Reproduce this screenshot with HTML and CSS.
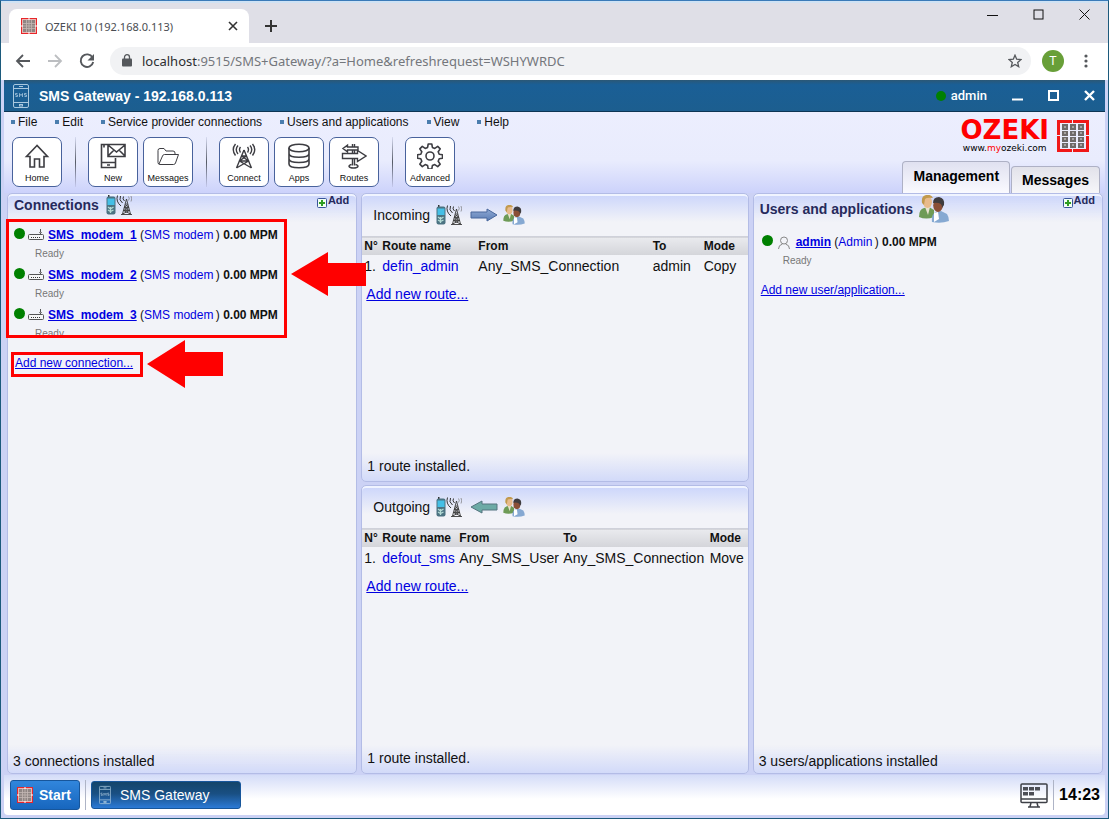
FILE: index.html
```html
<!DOCTYPE html>
<html lang="en">
<head>
<meta charset="utf-8">
<title>OZEKI 10 (192.168.0.113)</title>
<link rel="stylesheet" href="styles.css">
</head>
<body>
<svg class="defs" aria-hidden="true">
  <defs>
    <linearGradient id="blueArrow" x1="0" y1="0" x2="0" y2="1"><stop offset="0" stop-color="#8fa9d3"/><stop offset="1" stop-color="#5b7db5"/></linearGradient>
  </defs>
  <symbol id="grid-logo" viewBox="0 0 32 32">
    <path fill="#f01818" d="M0 0h15v3H3v12H0zM16 0h16v15h-3V3H16zM0 16h3v13h12v3H0zM29 16h3v16H16v-3h13z"/>
    <g fill="#6e6a6a"><path d="M5 4h6v6H5zM13 4h6v6h-6zM21 4h6v6h-6zM5 11h6v5H5zM13 11h6v5h-6zM21 11h6v5h-6zM5 17h6v5H5zM13 17h6v5h-6zM21 17h6v5h-6zM5 23h6v5H5zM13 23h6v5h-6zM21 23h6v5h-6z"/></g>
    <path stroke="#ddd" stroke-width="1" d="M7 7h2M15 7h2M23 7h2M7 13h2M15 13h2M23 13h2M7 19h2M15 19h2M23 19h2M7 25h2M15 25h2M23 25h2"/>
  </symbol>
  <symbol id="grid-small" viewBox="0 0 16 16">
    <rect x=".5" y=".5" width="15" height="15" fill="#e9b5b2" stroke="#e8262a"/>
    <rect x="2" y="2" width="12" height="12" fill="#8f8583"/>
    <path d="M5.500 2v12M8 2v12M10.500 2v12M2 5.500h12M2 8h12M2 10.500h12" stroke="#c4b8b4" stroke-width=".8"/>
    <path d="M8 0v2M8 14v2M0 8h2M14 8h2" stroke="#fff"/>
  </symbol>
  <symbol id="phone-sms" viewBox="0 0 16 24">
    <g fill="none" stroke="#a9c8de"><rect x=".5" y=".5" width="15" height="23" rx="1.500"/><path d="M1 4.500h14M1 18.500h14M6 2.500h4"/><path d="M4.500 9.500h-2v1.500h2v1.500h-2M6.500 13V9.500l1.500 2 1.500-2V13M13.500 9.500h-2v1.500h2v1.500h-2" stroke-width=".8"/><rect x="6.500" y="20.500" width="3" height="1.500"/></g>
  </symbol>
  <symbol id="tower" viewBox="0 0 26 20">
    <path d="M2 0h1.500v3H2z" fill="#333"/><rect x=".5" y="1.500" width="9" height="18" rx="2" fill="#4b7382"/><rect x="1.500" y="3.500" width="7" height="6.500" fill="#45bfe6"/>
    <path d="M2 12l2.500 2L7.500 12M2 15l2.500 1.500L7.500 15M4.500 12v6" fill="none" stroke="#b4dcd6" stroke-width="1.300"/>
    <path d="M20.500 4l-4 15M20.500 4l4 15M19.500 9h2M18.500 12.500h4M17.500 15.500h6M15 19.500h11M19 9.500l4 3-5.500 3 7 3.500M22 9.500l-4 3 5.500 3-7 3.500" fill="none" stroke="#3a3a3a" stroke-width=".9"/>
    <path d="M17.500 1.500q-1.500 2.500 1 4.500M14.500 1q-2 4 2 7M11.500.5q-2 6 3.500 10.500" fill="none" stroke="#333"/><path d="M22.500 1.500q1.500 2 0 4M25 1q1.500 3 0 5.500" fill="none" stroke="#777" stroke-width=".7"/>
  </symbol>
  <symbol id="people" viewBox="0 0 30 28">
    <path d="M0 22q0-8 5-9l5-1 5 3v7q-8 3-15 0z" fill="#6e9b56"/><path d="M6 12h5l-2 8z" fill="#e9e3cf"/>
    <ellipse cx="8.500" cy="7" rx="4.500" ry="6" fill="#e8bb8c"/><path d="M3 8q-1-7 4-8 5-1 7 3-6-1-8 1l-1 6z" fill="#c29a4d"/>
    <path d="M13 27q-1-8 4-10l5-1 6 3q2 3 2 7-8 3-17 1z" fill="#86a9d2"/><path d="M15 18l4-1 1 7-5 3z" fill="#fff"/>
    <ellipse cx="19" cy="10.500" rx="4.800" ry="6.500" fill="#8a4f37"/><path d="M14 8q0-6 6-6 6 1 5 8l-2 3q1-6-9-5z" fill="#3f3c3e"/>
  </symbol>
  <symbol id="modem" viewBox="0 0 16 12">
    <rect x=".5" y="5.500" width="15" height="5" rx="1" fill="#f6f6f6" stroke="#555"/><path d="M12.500 0v5" stroke="#555"/><path d="M11 3.500h3" stroke="#888"/><path d="M3 8.500h10" stroke="#333" stroke-dasharray="1 1"/>
  </symbol>
  <symbol id="plus" viewBox="0 0 10 10">
    <rect x=".5" y=".5" width="9" height="9" rx="1" fill="#f2fff2" stroke="#39559a"/><path d="M5 2v6M2 5h6" stroke="#2f9d22" stroke-width="2"/>
  </symbol>
</svg>

<div class="window">
  <header class="tabstrip">
    <div class="tab">
      <svg class="i16"><use href="#grid-small"/></svg>
      <span class="tab-title">OZEKI 10 (192.168.0.113)</span>
      <button class="plain" aria-label="Close tab"><svg class="i10" viewBox="0 0 10 10"><path d="M1 1l8 8M9 1L1 9" stroke="#333" stroke-width="1.600"/></svg></button>
    </div>
    <button class="plain new-tab" aria-label="New tab"><svg class="i12" viewBox="0 0 12 12"><path d="M6 0v12M0 6h12" stroke="#333" stroke-width="2"/></svg></button>
    <div class="win-controls">
      <button class="plain" aria-label="Minimize"><svg class="i11" viewBox="0 0 11 11"><path d="M0 6.500h11" stroke="#111"/></svg></button>
      <button class="plain" aria-label="Maximize"><svg class="i11" viewBox="0 0 11 11"><rect x="1" y="1" width="9" height="9" fill="none" stroke="#111"/></svg></button>
      <button class="plain" aria-label="Close"><svg class="i11" viewBox="0 0 11 11"><path d="M.5.5l10 10M10.500.5l-10 10" stroke="#111"/></svg></button>
    </div>
  </header>

  <div class="addressbar">
    <button class="plain" aria-label="Back"><svg class="i16" viewBox="0 0 16 16"><path d="M15 8H2M8 2L2 8l6 6" fill="none" stroke="#55585c" stroke-width="1.800"/></svg></button>
    <button class="plain" aria-label="Forward"><svg class="i16" viewBox="0 0 16 16"><path d="M1 8h13M8 2l6 6-6 6" fill="none" stroke="#bcbec1" stroke-width="1.800"/></svg></button>
    <button class="plain" aria-label="Reload"><svg class="i16" viewBox="0 0 16 16"><path d="M13.500 4.500A6.300 6.300 0 1 0 14.200 9" fill="none" stroke="#55585c" stroke-width="1.900"/><path d="M15 1v6.500H8.500z" fill="#55585c"/></svg></button>
    <div class="url">
      <svg class="lock" viewBox="0 0 10 13"><rect y="4.500" width="10" height="8" rx="1" fill="#55585c"/><path d="M2.500 5V3.200a2.500 2.500 0 0 1 5 0V5" fill="none" stroke="#55585c" stroke-width="1.300"/></svg>
      <span class="url-text"><b>localhost</b>:9515/SMS+Gateway/?a=Home&amp;refreshrequest=WSHYWRDC</span>
      <button class="plain" aria-label="Bookmark"><svg class="i14" viewBox="0 0 14 14"><path d="M7 1.200l1.700 4 4.300.4-3.300 2.800 1 4.300L7 10.400l-3.700 2.300 1-4.300L1 5.600l4.300-.4z" fill="none" stroke="#55585c" stroke-width="1.300"/></svg></button>
    </div>
    <button class="avatar">T</button>
    <button class="plain" aria-label="Menu"><svg class="dots" viewBox="0 0 4 14"><g fill="#55585c"><circle cx="2" cy="2" r="1.600"/><circle cx="2" cy="7" r="1.600"/><circle cx="2" cy="12" r="1.600"/></g></svg></button>
  </div>

  <main class="desktop">
    <div class="titlebar">
      <svg class="title-phone"><use href="#phone-sms"/></svg>
      <h1>SMS Gateway - 192.168.0.113</h1>
      <span class="dot small"></span><span class="user">admin</span>
      <button class="plain" aria-label="Minimize app"><svg class="i11" viewBox="0 0 11 11"><path d="M0 9.500h11" stroke="#fff" stroke-width="2"/></svg></button>
      <button class="plain" aria-label="Maximize app"><svg class="i11" viewBox="0 0 11 11"><rect x="1" y="1" width="9" height="9" fill="none" stroke="#fff" stroke-width="2"/></svg></button>
      <button class="plain" aria-label="Close app"><svg class="i11" viewBox="0 0 11 11"><path d="M1 1l9 9M10 1l-9 9" stroke="#fff" stroke-width="2.400"/></svg></button>
    </div>

    <div class="top">
      <div class="top-left">
        <nav class="menu">
          <a href="#">File</a><a href="#">Edit</a><a href="#">Service provider connections</a><a href="#">Users and applications</a><a href="#">View</a><a href="#">Help</a>
        </nav>
        <div class="toolbar">
          <button class="tool"><svg viewBox="0 0 26 26"><path d="M13 2.500L2.500 13.500H6V24h4.500v-8h5v8H20V13.500h3.500z"/></svg>Home</button>
          <i class="sep"></i>
          <button class="tool"><svg viewBox="0 0 26 26"><path d="M8 1.500H1.500v23h14V15M2 19.500h13M7 22h3M8 1.500h17v12H8zM8 2l8.500 7L25 2M8 13l6-6M25 13l-6-6M4 1.500v3"/></svg>New</button>
          <button class="tool"><svg viewBox="0 0 26 26"><path class="thin" d="M5 21.500q-2 0-2-2v-12q0-2 2-2h4l2 2.500h7q2 0 2 2v1.500M5 21.500h13.500q1.500 0 2-1.500l3-8.500H9.500q-1.500 0-2 1.500l-3.500 8"/></svg>Messages</button>
          <i class="sep"></i>
          <button class="tool"><svg viewBox="0 0 26 26"><g stroke-width="1.400"><path d="M13 7L5.500 25M13 7l7.500 18M10.500 13h5M8.500 18h9M10.500 13l7 5-12 7M15.500 13l-7 5 12 7"/><path d="M9.500 4q-2 2.500 0 5.500M7 2.500q-3.500 4 0 8.500M4.500 1q-4.500 5.500 0 11.500M16.500 4q2 2.500 0 5.500M19 2.500q3.500 4 0 8.500M21.500 1q4.500 5.500 0 11.500"/></g></svg>Connect</button>
          <button class="tool"><svg viewBox="0 0 26 26"><ellipse cx="13" cy="5" rx="10" ry="3.800"/><path d="M3 5v16c0 5 20 5 20 0V5M3 10.500c0 5 20 5 20 0M3 15.800c0 5 20 5 20 0"/></svg>Apps</button>
          <button class="tool"><svg viewBox="0 0 26 26"><path stroke-width="1.400" d="M11.500 1v2.500M11.500 7.500V10M11.500 16v6.500M13.500 1v2.500M13.500 7.500V10M13.500 16v6.500M6.500 4H17v3H6.500v1.800L2 5.500 6.500 2.200zM1.500 10.500H16.500V7.500l8.500 5.500-8.500 5.500v-3H1.500zM10.500 21.500c-4 1-3 3.500 2 3.500s6-2.500 2-3.500"/></svg>Routes</button>
          <i class="sep"></i>
          <button class="tool"><svg viewBox="0 0 26 26"><circle cx="13" cy="13" r="4"/><path stroke-linejoin="round" d="M11.200 1h3.600l.6 3.400 2.400 1 2.900-2 2.500 2.500-2 2.900 1 2.400 3.300.6v3.400l-3.300.6-1 2.400 2 2.900-2.500 2.500-2.900-2-2.400 1-.6 3.400h-3.600l-.6-3.400-2.400-1-2.900 2-2.500-2.500 2-2.900-1-2.400-3.300-.6v-3.400l3.300-.6 1-2.400-2-2.900 2.500-2.500 2.900 2 2.400-1z"/></svg>Advanced</button>
        </div>
      </div>
      <div class="top-right">
        <div class="brand">
          <div><div class="brand-name">OZEKI</div><div class="brand-url">www.<em>my</em>ozeki.com</div></div>
          <svg class="brand-logo"><use href="#grid-logo"/></svg>
        </div>
        <div class="tabs"><button class="active">Management</button><button>Messages</button></div>
      </div>
    </div>

    <div class="panels">
      <section class="panel">
        <div class="panel-head"><h2>Connections</h2><svg class="tower"><use href="#tower"/></svg><button class="add"><svg class="i10"><use href="#plus"/></svg>Add</button></div>
        <div class="marked list">
          <div class="entry"><span class="dot"></span><svg class="modem"><use href="#modem"/></svg><p><a class="name" href="#">SMS_modem_1</a> (<a href="#">SMS modem</a>&thinsp;) <b>0.00 MPM</b></p><small>Ready</small></div>
          <div class="entry"><span class="dot"></span><svg class="modem"><use href="#modem"/></svg><p><a class="name" href="#">SMS_modem_2</a> (<a href="#">SMS modem</a>&thinsp;) <b>0.00 MPM</b></p><small>Ready</small></div>
          <div class="entry"><span class="dot"></span><svg class="modem"><use href="#modem"/></svg><p><a class="name" href="#">SMS_modem_3</a> (<a href="#">SMS modem</a>&thinsp;) <b>0.00 MPM</b></p><small>Ready</small></div>
        </div>
        <a class="marked add-link" href="#">Add new connection...</a>
        <footer>3 connections installed</footer>
        <svg class="arrow arrow-list" viewBox="0 0 75 44"><path fill="red" d="M0 22L37 0v11h38v23H37v10z"/></svg>
        <svg class="arrow arrow-link" viewBox="0 0 76 48"><path fill="red" d="M0 24L38 0v12h38v24H38v12z"/></svg>
      </section>

      <div class="routes">
        <section class="panel">
          <div class="route-head">Incoming<svg class="tower"><use href="#tower"/></svg><svg class="dir" viewBox="0 0 28 14"><path d="M1 4h16V1l10 6-10 6v-3H1z" fill="url(#blueArrow)" stroke="#49679c"/></svg><svg class="people-s"><use href="#people"/></svg></div>
          <table>
            <thead><tr><th class="c-no">N°</th><th class="c-in-name">Route name</th><th>From</th><th class="c-in-to">To</th><th class="c-in-mode">Mode</th></tr></thead>
            <tbody><tr><td>1.</td><td><a href="#">defin_admin</a></td><td>Any_SMS_Connection</td><td>admin</td><td>Copy</td></tr></tbody>
          </table>
          <a class="route-link" href="#">Add new route...</a>
          <footer>1 route installed.</footer>
        </section>
        <section class="panel">
          <div class="route-head">Outgoing<svg class="tower"><use href="#tower"/></svg><svg class="dir" viewBox="0 0 28 14"><path d="M27 4H12V1L1 7l11 6v-3h15z" fill="#6caaa5" stroke="#54757e"/></svg><svg class="people-s"><use href="#people"/></svg></div>
          <table>
            <thead><tr><th class="c-no">N°</th><th class="c-out-name">Route name</th><th class="c-out-from">From</th><th>To</th><th class="c-out-mode">Mode</th></tr></thead>
            <tbody><tr><td>1.</td><td><a href="#">defout_sms</a></td><td>Any_SMS_User</td><td>Any_SMS_Connection</td><td>Move</td></tr></tbody>
          </table>
          <a class="route-link" href="#">Add new route...</a>
          <footer>1 route installed.</footer>
        </section>
      </div>

      <section class="panel users">
        <div class="panel-head"><h2>Users and applications</h2><svg class="people"><use href="#people"/></svg><button class="add"><svg class="i10"><use href="#plus"/></svg>Add</button></div>
        <div class="list">
          <div class="entry"><span class="dot"></span><svg class="person" viewBox="0 0 12 13"><g fill="none" stroke="#888"><circle cx="6" cy="4.500" r="3.500"/><path d="M.5 13q0-4 4-5M11.500 13q0-4-4-5"/></g></svg><p><a class="name" href="#">admin</a> (<a href="#">Admin</a>&thinsp;) <b>0.00 MPM</b></p><small>Ready</small></div>
        </div>
        <a class="add-link" href="#">Add new user/application...</a>
        <footer>3 users/applications installed</footer>
      </section>
    </div>

    <footer class="taskbar">
      <button class="start"><svg class="i16"><use href="#grid-small"/></svg>Start</button>
      <i class="line"></i>
      <button class="task"><svg class="task-phone"><use href="#phone-sms"/></svg>SMS Gateway</button>
      <svg class="monitor" viewBox="0 0 28 25"><g fill="none" stroke="#3e4047" stroke-width="1.500"><rect x="1" y="1" width="26" height="18.500" rx="1"/><path d="M1 16h26M11 20l-1 3.500M17 20l1 3.500M8 24h12"/></g><g fill="#4c4e55"><path d="M3 4h5v3.500H3zM9 4h5v3.500H9zM15 4h5v3.500h-5zM3 9h5v3.500H3zM9 9h5v3.500H9z"/></g></svg>
      <i class="line"></i>
      <time>14:23</time>
    </footer>
  </main>
</div>
</body>
</html>
```

FILE: styles.css
```css
* { box-sizing: border-box; }
body { margin: 0; font-family: "Liberation Sans", Arial, sans-serif; color: #111; }
button { font: inherit; color: inherit; margin: 0; }
svg { display: block; flex: none; }
h1, h2, p { margin: 0; }
a { color: #0000e0; text-decoration: none; }

.defs { position: absolute; width: 0; height: 0; }
.plain { border: 0; background: none; padding: 0; }
.i10 { width: 10px; height: 10px; }
.i11 { width: 11px; height: 11px; }
.i12 { width: 12px; height: 12px; }
.i14 { width: 14px; height: 14px; }
.i16 { width: 16px; height: 16px; }

.window {
  min-height: 100vh;
  display: flex;
  flex-direction: column;
  border: 1px solid #1c5a7c;
  border-top-color: #3a7ab8;
  background: #fff;
}

/* browser chrome */
.tabstrip {
  height: 42px;
  padding: 6px 18px 0 8px;
  display: flex;
  align-items: flex-start;
  background: #dfdfe7;
  border-top: 2px solid #cfe2f4;
}
.tab {
  width: 240px;
  height: 34px;
  padding: 0 11px 0 12px;
  display: flex;
  align-items: center;
  gap: 8px;
  background: #fff;
  border-radius: 8px 8px 0 0;
}
.tab-title { flex: 1; font: 11px "Noto Sans", sans-serif; color: #4a4d52; white-space: nowrap; }
.new-tab { padding: 11px 16px; }
.win-controls { margin-left: auto; display: flex; gap: 35px; }
.addressbar {
  height: 37px;
  padding: 0 16px 2px 14px;
  display: flex;
  align-items: center;
  gap: 16px;
}
.url {
  flex: 1;
  height: 28px;
  padding: 0 9px 0 12px;
  display: flex;
  align-items: center;
  gap: 10px;
  margin: 0 -5px 0 -1px;
  border-radius: 14px;
  background: #f1f2f4;
}
.lock { width: 10px; height: 13px; }
.url-text { flex: 1; font: 13px "Noto Sans", sans-serif; color: #74777c; white-space: nowrap; }
.url-text b { font-weight: 400; color: #2c2e31; }
.avatar { width: 22px; height: 22px; padding: 0; border: 0; border-radius: 50%; background: #689f38; color: #fff; font-size: 12px; }
.dots { width: 4px; height: 14px; margin: 0 4px; }

/* application desktop */
.desktop {
  flex: 1;
  display: flex;
  flex-direction: column;
  padding: 0 3px 3px;
  background: #ccd2f5;
}
.titlebar {
  height: 32px;
  padding: 0 10px 0 9px;
  display: flex;
  align-items: center;
  background: linear-gradient(#2b5876, #1a5f96 15%, #1c5e8f);
  border-bottom: 1px solid #0d3554;
  color: #fff;
}
.title-phone { width: 16px; height: 24px; }
.titlebar h1 { flex: 1; margin-left: 10px; font-size: 14px; }
.titlebar button { margin-left: 25px; }
.user { margin-left: 5px; font: 500 13px Roboto, sans-serif; }
.dot { width: 11px; height: 11px; flex: none; border-radius: 50%; background: #008000; }
.dot.small { width: 10px; height: 10px; }

.top {
  height: 81px;
  display: flex;
  justify-content: space-between;
  background: linear-gradient(#eceefe, #e9ecfd 60%, #ccd2fb);
}
.menu { display: flex; padding: 3px 7px 0; font-size: 12px; line-height: 14px; gap: 18px; }
.menu a { display: flex; align-items: center; gap: 3px; color: #111; }
.menu a::before { content: ""; width: 4px; height: 4px; background: #4a7dae; }
.toolbar { display: flex; gap: 5px; padding: 8px 8px 0; }
.tool {
  width: 50px;
  height: 50px;
  padding: 5px 0 0;
  display: flex;
  flex-direction: column;
  align-items: center;
  gap: 3px;
  border: 1px solid #48629c;
  border-radius: 7px;
  background: #fff;
  font-size: 9px;
  line-height: 12px;
}
.tool svg { width: 26px; height: 26px; fill: none; stroke: #3d3d42; stroke-width: 1.600; }
.tool .thin { stroke-width: 1; }
.sep { width: 1px; margin: 0 7px 0 8px; background: linear-gradient(#d8dcf2, #555a66 50%, #c6caee); }
.top-right { display: flex; flex-direction: column; align-items: flex-end; justify-content: space-between; padding-right: 5px; }
.brand { display: flex; align-items: center; gap: 8px; padding: 6px 11px 0 0; }
.brand-name { font: bold 26px/24px "DejaVu Sans", sans-serif; color: #f00; }
.brand-url { font: 9px/12px "DejaVu Sans", sans-serif; text-align: center; color: #000; white-space: nowrap; }
.brand-url em { font-style: normal; color: #f00; }
.brand-logo { width: 32px; height: 32px; }
.tabs { display: flex; align-items: flex-end; gap: 1px; }
.tabs button {
  height: 27px;
  padding: 0 10px;
  border: 1px solid #aeb1c5;
  border-bottom: 0;
  border-radius: 4px 4px 0 0;
  background: linear-gradient(#e2e2ea, #f6f6f9);
  font-weight: bold;
  font-size: 14px;
  color: #000;
}
.tabs .active { height: 32px; padding-bottom: 4px; background: linear-gradient(#e0e1f0, #fafaff); }

.panels {
  flex: 1;
  display: grid;
  grid-template-columns: 350fr 387fr 350fr;
  gap: 4px;
  padding: 0 2px 1px 3px;
}
.routes { display: grid; grid-template-rows: 1fr 1fr; gap: 3px; }
.panel {
  position: relative;
  display: flex;
  flex-direction: column;
  align-items: flex-start;
  min-width: 0;
  border: 1px solid #b3bce6;
  border-radius: 5px;
  background:
    linear-gradient(#cbd5fb, rgba(242, 243, 248, 0) 28px),
    linear-gradient(to top, #d2daf9, rgba(242, 243, 248, 0) 28px),
    #f2f3f8;
  box-shadow: inset 0 2px 0 #f0f4ff;
}
.panel > footer { margin-top: auto; padding: 0 5px 4px; font-size: 14px; line-height: 16px; }
.routes .panel > footer { padding-bottom: 7px; }
.panel-head { width: 100%; height: 25px; padding: 0 7px 3px 6px; display: flex; align-items: center; }
.panel h2 { font-size: 14px; color: #262a5c; }
.tower { width: 26px; height: 20px; margin-left: 7px; }
.add { margin-left: auto; align-self: flex-start; display: flex; align-items: flex-end; gap: 1px; padding: 0; border: 0; background: none; font-weight: bold; font-size: 11px; line-height: 12px; color: #262a5c; }
.add svg { margin-bottom: -2px; }
.list { width: 279px; padding: 5px; }
.marked { border: 3px solid #f00; }
.marked.list { width: 281px; height: 119px; margin-left: -2px; padding: 0 5px; overflow: hidden; }
.entry {
  height: 40px;
  padding-top: 4px;
  display: grid;
  grid-template-columns: 11px 16px 1fr;
  grid-template-rows: 18px 18px;
  column-gap: 3px;
  align-items: center;
  white-space: nowrap;
  font-size: 12px;
}
.entry .name { font-weight: bold; text-decoration: underline; }
.entry small { grid-column: 2 / 4; margin-left: 7px; font-size: 10px; color: #777; }
.entry .dot { margin-bottom: 3px; }
.modem { width: 16px; height: 12px; }
.entry p { padding-left: 1px; }
.person { width: 12px; height: 13px; justify-self: center; }
.add-link { font-size: 12px; text-decoration: underline; margin-left: 7px; }
.marked.add-link { margin: 14px 0 0 3px; padding: 1px 7px 4px 1px; line-height: 14px; }
.arrow { position: absolute; z-index: 1; }
.arrow-list { left: 283px; top: 58px; width: 75px; height: 44px; }
.arrow-link { left: 139px; top: 146px; width: 76px; height: 48px; }

.users .panel-head { height: 31px; padding-bottom: 1px; }
.users .people { width: 30px; height: 28px; margin-left: 6px; }
.users .list { padding: 4px 8px; }
.users .add-link { margin-top: 10px; }

.route-head { width: 100%; height: 42px; padding-left: 11px; display: flex; align-items: center; font-size: 14px; }
.route-head .tower { margin-left: 6px; }
.dir { width: 28px; height: 14px; margin: 0 5px 0 8px; }
.people-s { width: 22px; height: 20px; }
table { width: 100%; table-layout: fixed; border-collapse: collapse; white-space: nowrap; text-align: left; }
thead { background: linear-gradient(#e9eaee, #d4d5da); border-top: 1px solid #cfd1da; }
th, td { padding: 0 0 0 2px; }
th { height: 18px; font-size: 12px; }
td { height: 22px; font-size: 14px; }
.c-no { width: 18px; }
.c-in-name { width: 96px; }
.c-in-to { width: 51px; }
.c-in-mode { width: 46px; }
.c-out-name { width: 77px; }
.c-out-from { width: 104px; }
.c-out-mode { width: 40px; }
.route-link { margin: 9px 0 0 4px; font-size: 14px; line-height: 16px; text-decoration: underline; }

/* bottom bar */
.taskbar {
  height: 40px;
  padding: 0 5px 0 6px;
  display: flex;
  align-items: center;
  gap: 5px;
  background: linear-gradient(#d4dcf8, #fff 60%);
  border-radius: 0 0 4px 4px;
}
.start, .task { display: flex; align-items: center; color: #fff; font-size: 14px; border-radius: 3px; border: 1px solid #17569b; }
.start { width: 70px; height: 30px; padding: 0 6px; gap: 6px; font-weight: bold; background: linear-gradient(#3186dc, #1766be); }
.task { width: 150px; height: 28px; padding: 0 7px; gap: 9px; background: linear-gradient(#14456a, #194f83 45%, #2b7ad6); }
.task-phone { width: 12px; height: 20px; }
.line { width: 1px; height: 30px; background: #aeb4c6; }
.monitor { width: 28px; height: 25px; margin-left: auto; }
time { font-size: 16px; font-weight: bold; color: #000; }
```
